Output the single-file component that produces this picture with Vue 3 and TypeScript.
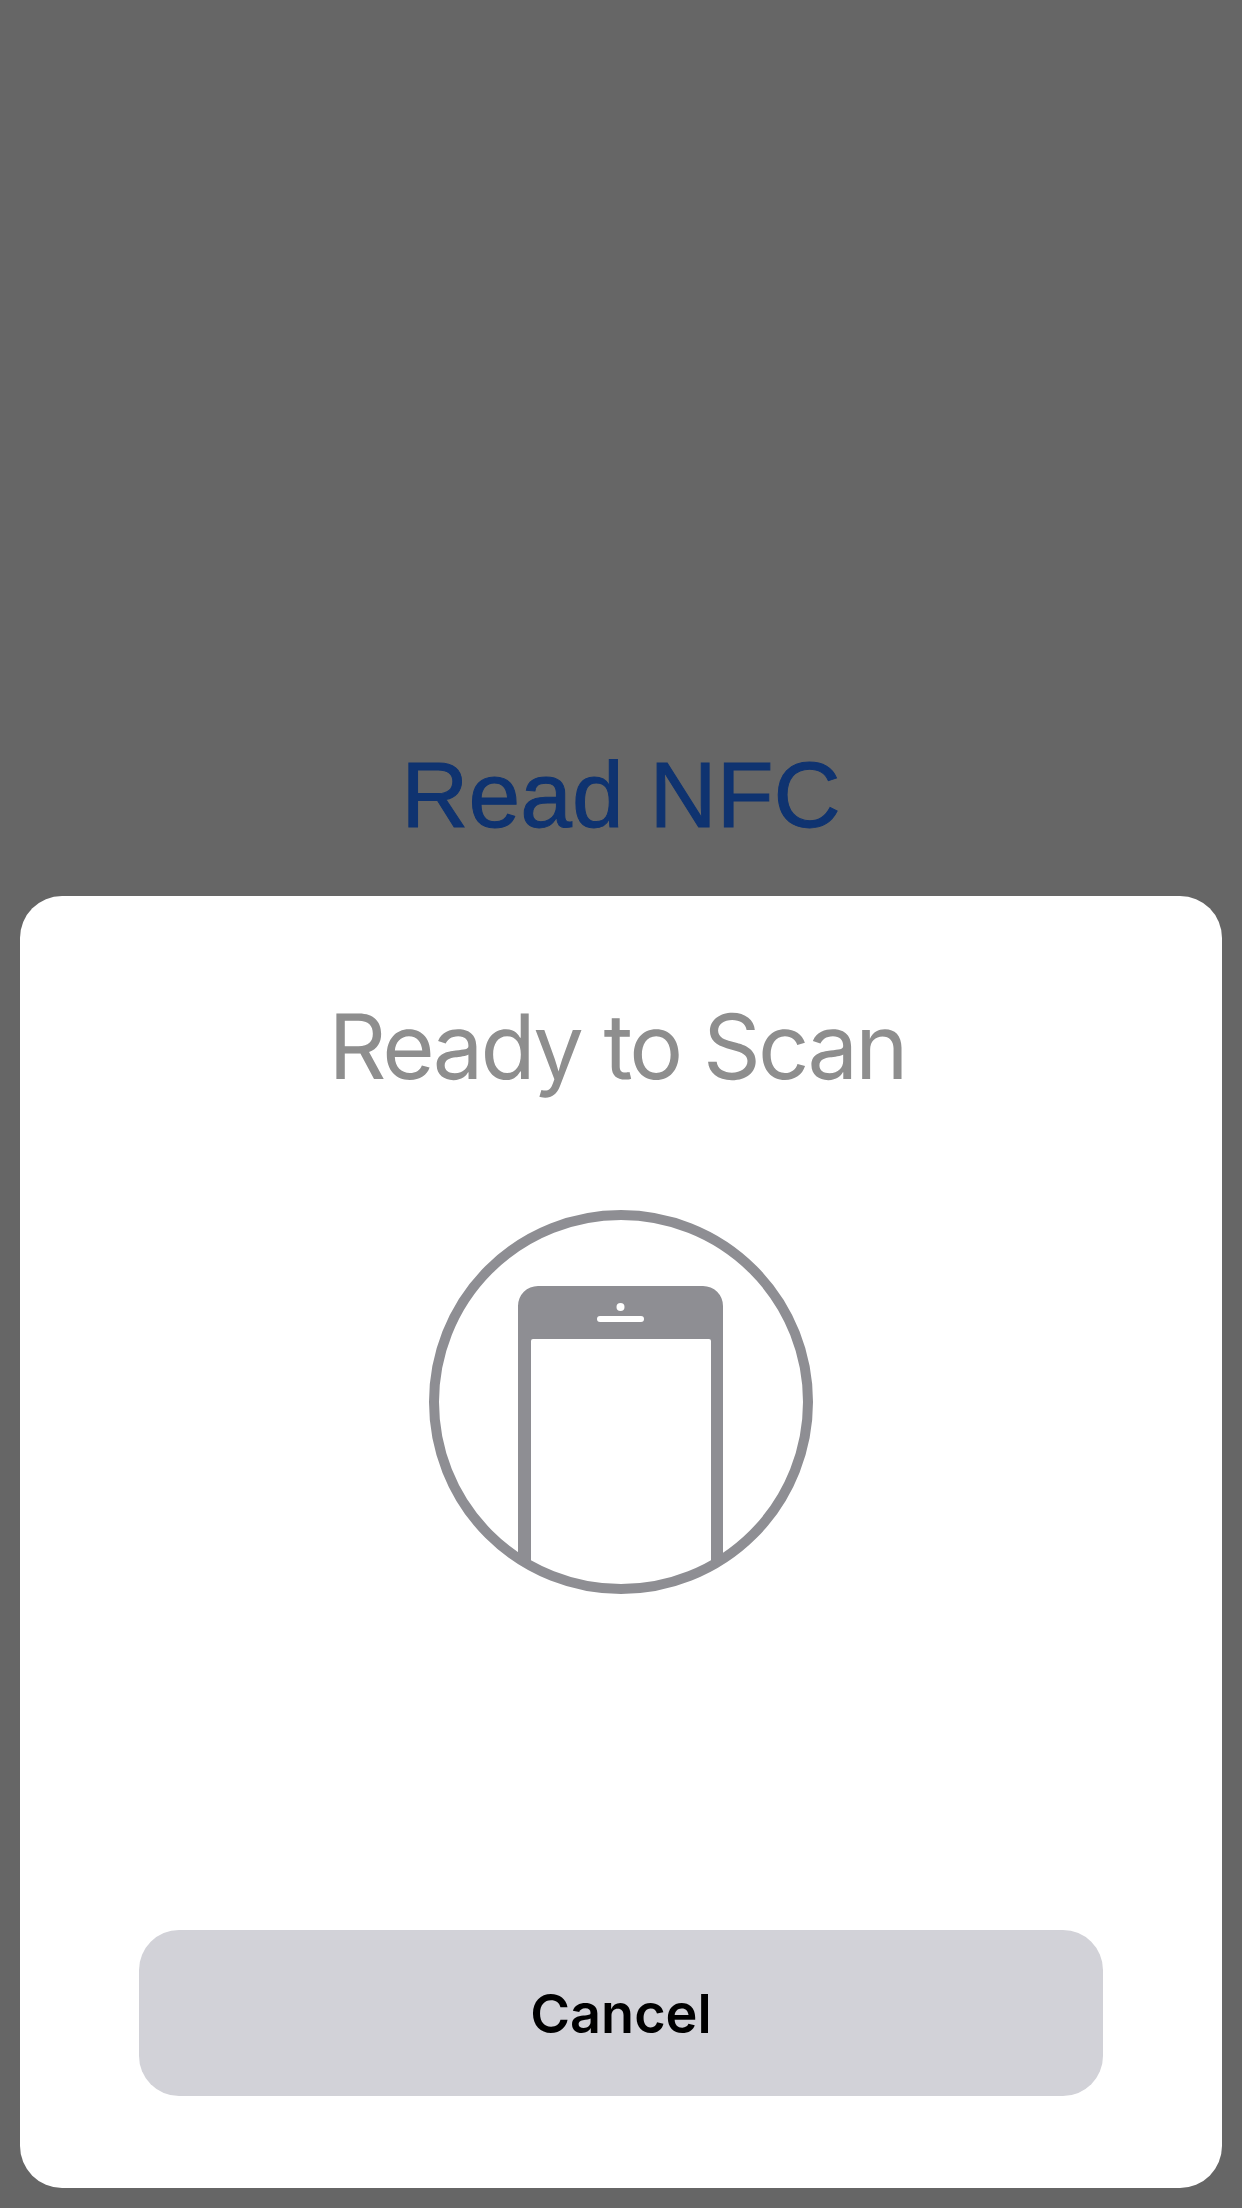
<template>
  <main class="screen">
    <h1 class="read-title">Read NFC</h1>
    <section class="sheet">
      <h2 class="sheet-title">Ready to Scan</h2>
      <svg class="phone-icon" viewBox="0 0 384 384" width="384" height="384" aria-hidden="true">
        <defs>
          <clipPath id="ring-clip">
            <circle cx="192" cy="192" r="188" />
          </clipPath>
        </defs>
        <circle cx="192" cy="192" r="187" fill="none" stroke="#8e8e93" stroke-width="10" />
        <path
          clip-path="url(#ring-clip)"
          fill="#8e8e93"
          fill-rule="evenodd"
          d="M89 96a20 20 0 0 1 20-20h165a20 20 0 0 1 20 20v288H89ZM104 129a2 2 0 0 0-2 2v253h180V131a2 2 0 0 0-2-2Z"
        />
        <circle cx="191.500" cy="97" r="4" fill="#fff" />
        <rect x="168" y="106" width="47" height="6" rx="3" fill="#fff" />
      </svg>
      <button class="cancel" type="button">Cancel</button>
    </section>
  </main>
</template>

<script setup lang="ts">
</script>

<style>
html,
body {
  margin: 0;
  background: #666666;
}
</style>

<style scoped>
.screen {
  box-sizing: border-box;
  width: 1242px;
  height: 2208px;
  padding: 0 20px 20px;
  display: flex;
  flex-direction: column;
  justify-content: flex-end;
  background: #666666;
  text-rendering: geometricPrecision;
}

.read-title {
  margin: 0 0 48px;
  text-align: center;
  font-family: "Liberation Sans", Arial, sans-serif;
  font-size: 93px;
  line-height: 106px;
  font-weight: 400;
  color: #0f3370;
  -webkit-text-stroke: 1px #0f3370;
}

.sheet {
  box-sizing: border-box;
  height: 1292px;
  padding: 98px 119px 0;
  display: flex;
  flex-direction: column;
  align-items: center;
  background: #ffffff;
  border-radius: 42px;
}

.sheet-title {
  margin: 0;
  padding-right: 8px;
  font-family: Inter, "Liberation Sans", sans-serif;
  font-size: 90px;
  line-height: 106px;
  font-weight: 400;
  letter-spacing: -2.8px;
  color: #8e8e8e;
  white-space: nowrap;
}

.phone-icon {
  display: block;
  margin-top: 110px;
}

.cancel {
  margin-top: 336px;
  width: 100%;
  height: 166px;
  border: 0;
  border-radius: 40px;
  background: #d2d2d8;
  font-family: Inter, "Liberation Sans", sans-serif;
  font-size: 54px;
  font-weight: 600;
  color: #000000;
}
</style>
